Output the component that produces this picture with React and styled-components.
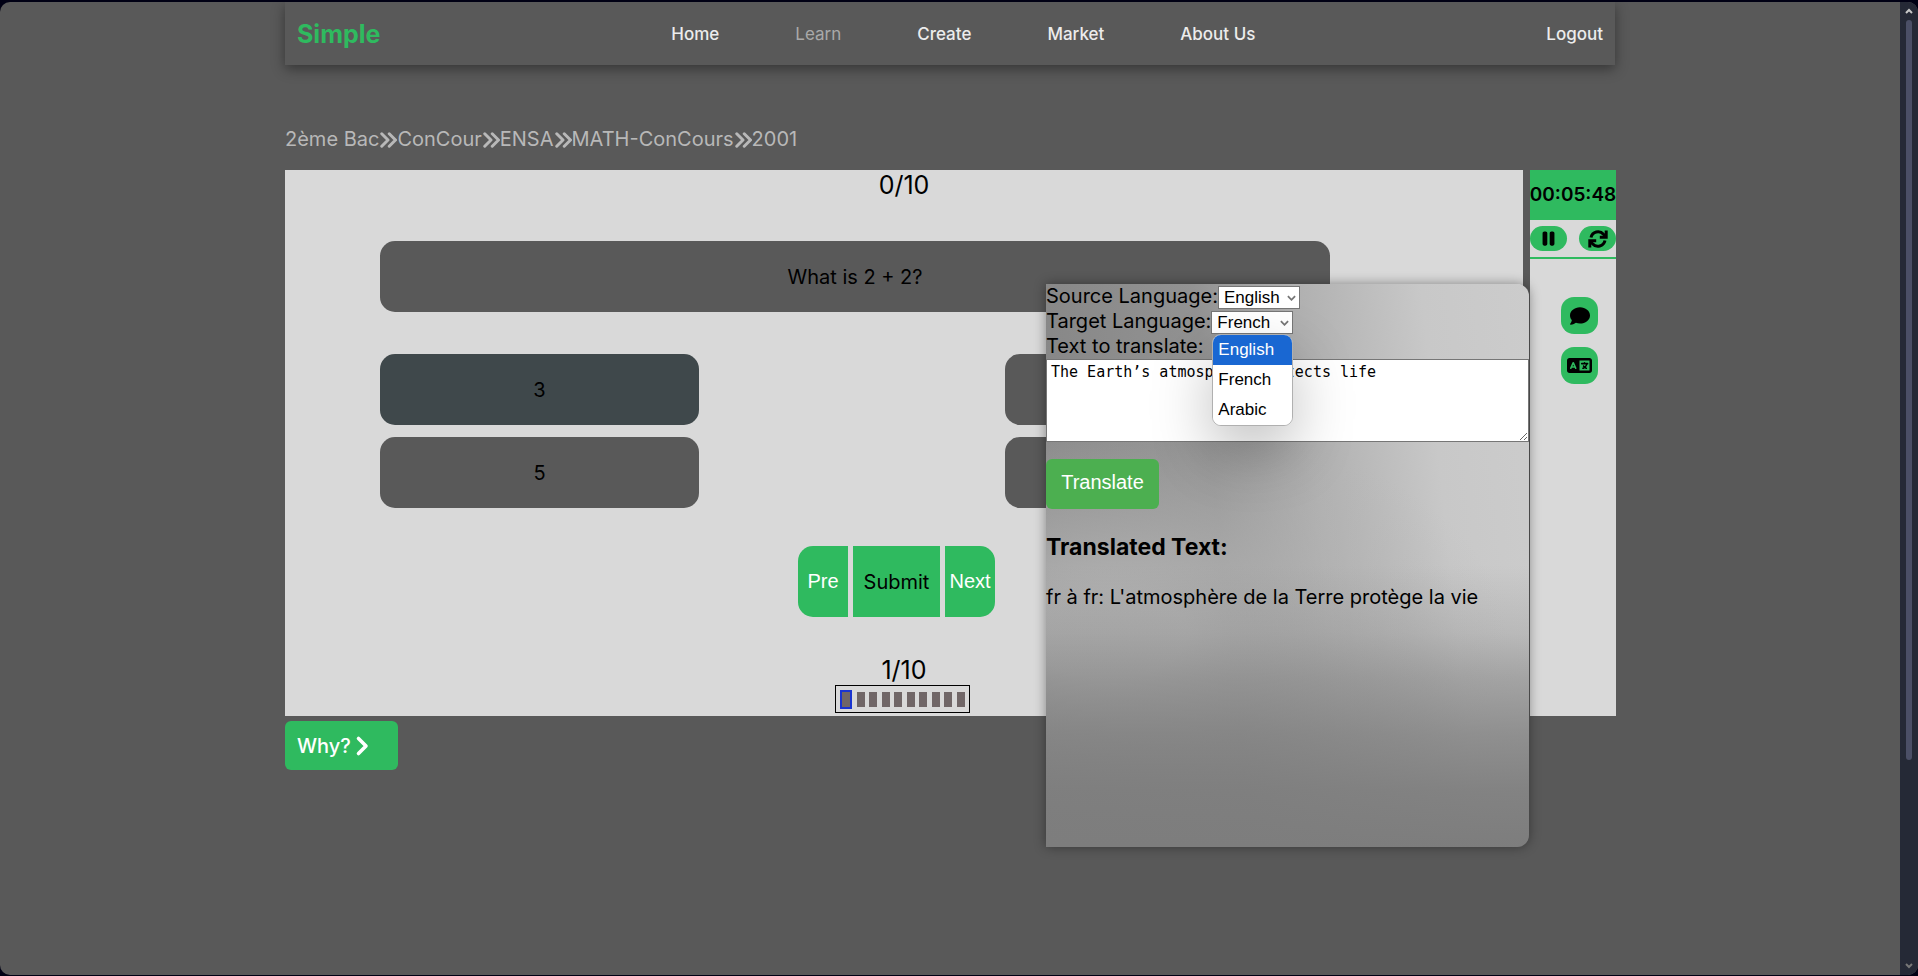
import React, { useState } from 'react';
import styled, { createGlobalStyle } from 'styled-components';
import { FaComment, FaLanguage, FaPause } from 'react-icons/fa6';

const links = ['Home', 'Learn', 'Create', 'Market', 'About Us'];
const crumbs = ['2ème Bac', 'ConCour', 'ENSA', 'MATH-ConCours', '2001'];
const answers = ['3', '4', '5', '6'];
const languages = ['English', 'French', 'Arabic'];
const total = 10;

const App = () => {
  const [chosen, setChosen] = useState('3');
  const [current, setCurrent] = useState(0);
  const [source, setSource] = useState('English');
  const [target, setTarget] = useState('French');
  const [text, setText] = useState('The Earth’s atmosphere protects life');
  const [menuOpen, setMenuOpen] = useState(true);

  const pickTarget = (language) => {
    setTarget(language);
    setMenuOpen(false);
  };

  return (
    <Frame>
      <GlobalStyle />
      <Window>
        <Page>
          <Content>
            <Navbar>
              <Brand href='#'>Simple</Brand>
              <NavLinks>
                {links.map((link) => (
                  <NavLink key={link} href='#' $active={link === 'Learn'}>
                    {link}
                  </NavLink>
                ))}
              </NavLinks>
              <NavLink href='#'>Logout</NavLink>
            </Navbar>

            <Breadcrumb>
              {crumbs.map((crumb, i) => (
                <React.Fragment key={crumb}>
                  {i > 0 && <AnglesRight />}
                  <Crumb href='#'>{crumb}</Crumb>
                </React.Fragment>
              ))}
            </Breadcrumb>

            <Board>
              <Quiz>
                <Count>0/{total}</Count>
                <Question>What is 2 + 2?</Question>
                <Answers>
                  {answers.map((answer) => (
                    <Answer key={answer} $chosen={answer === chosen} onClick={() => setChosen(answer)}>
                      {answer}
                    </Answer>
                  ))}
                </Answers>
                <Controls>
                  <StepButton $side='left' onClick={() => setCurrent(Math.max(0, current - 1))}>
                    Pre
                  </StepButton>
                  <SubmitButton>Submit</SubmitButton>
                  <StepButton $side='right' onClick={() => setCurrent(Math.min(total - 1, current + 1))}>
                    Next
                  </StepButton>
                </Controls>
                <Count>
                  {current + 1}/{total}
                </Count>
                <Steps>
                  {Array.from({ length: total }, (_, i) => (
                    <Step key={i} $current={i === current} />
                  ))}
                </Steps>
              </Quiz>

              <Side>
                <Timer>00:05:48</Timer>
                <TimerButtons>
                  <PillButton aria-label='Pause'>
                    <FaPause />
                  </PillButton>
                  <PillButton aria-label='Restart'>
                    <Rotate />
                  </PillButton>
                </TimerButtons>
                <Tools>
                  <ToolButton aria-label='Comments'>
                    <FaComment size={20} />
                  </ToolButton>
                  <ToolButton aria-label='Translator'>
                    <FaLanguage size={25} />
                  </ToolButton>
                </Tools>
              </Side>

              <Translator>
                <Field>
                  <label htmlFor='source'>Source Language:</label>
                  <SelectBox>
                    <Select id='source' value={source} onChange={(e) => setSource(e.target.value)}>
                      {languages.map((language) => (
                        <option key={language}>{language}</option>
                      ))}
                    </Select>
                    <Chevron />
                  </SelectBox>
                </Field>
                <Field>
                  <label htmlFor='target'>Target Language:</label>
                  <SelectBox>
                    <Select id='target' value={target} onChange={(e) => setTarget(e.target.value)}>
                      {languages.map((language) => (
                        <option key={language}>{language}</option>
                      ))}
                    </Select>
                    <Chevron />
                    {menuOpen && (
                      <Menu role='listbox' aria-label='Target Language'>
                        {languages.map((language, i) => (
                          <MenuItem key={language} role='option' aria-selected={i === 0} $active={i === 0} onClick={() => pickTarget(language)}>
                            {language}
                          </MenuItem>
                        ))}
                      </Menu>
                    )}
                  </SelectBox>
                </Field>
                <Field>
                  <label htmlFor='text'>Text to translate:</label>
                </Field>
                <TextArea id='text' value={text} onChange={(e) => setText(e.target.value)} spellCheck={false} />
                <TranslateButton>Translate</TranslateButton>
                <ResultTitle>Translated Text:</ResultTitle>
                <Result>fr à fr: L'atmosphère de la Terre protège la vie</Result>
              </Translator>
            </Board>

            <WhyButton>
              Why? <AngleRight />
            </WhyButton>
          </Content>
        </Page>

        <Scrollbar aria-hidden='true'>
          <ScrollArrow viewBox='0 0 8 6'>
            <path d='M1 5l3-3 3 3' stroke='#c8c8c8' />
          </ScrollArrow>
          <Track>
            <Thumb />
          </Track>
          <ScrollArrow viewBox='0 0 8 6'>
            <path d='M1 1l3 3 3-3' stroke='#777777' />
          </ScrollArrow>
        </Scrollbar>
      </Window>
    </Frame>
  );
};

const Chevron = () => (
  <ChevronIcon viewBox='0 0 10 6' aria-hidden='true'>
    <path d='M1 1l4 4 4-4' />
  </ChevronIcon>
);

const AnglesRight = () => (
  <AngleIcon width='18' height='20' viewBox='0 0 448 512' aria-hidden='true'>
    <path d='M64 96l160 160L64 416M256 96l160 160-160 160' />
  </AngleIcon>
);

const AngleRight = () => (
  <AngleIcon width='15' height='24' viewBox='0 0 320 512' aria-hidden='true'>
    <path d='M96 96l160 160L96 416' />
  </AngleIcon>
);

const Rotate = () => (
  <RotateIcon viewBox='0 0 20 20' aria-hidden='true'>
    <path d='M3 8.5a7.2 7.2 0 0 1 12.5-3.2L17.8 7.6' />
    <path d='M18.2 1.6v6.6h-6.4' />
    <path d='M17 11.5a7.2 7.2 0 0 1-12.5 3.2L2.2 12.4' />
    <path d='M1.8 18.4v-6.6h6.4' />
  </RotateIcon>
);

const GlobalStyle = createGlobalStyle`
  * {
    box-sizing: border-box;
  }
  body {
    margin: 0;
    background-color: #000014;
    font-family: Inter, 'Liberation Sans', sans-serif;
    font-size: 20px;
    line-height: 25px;
    color: #000;
  }
  button {
    border: none;
    padding: 0;
    cursor: pointer;
  }
`;

const Frame = styled.div`
  display: flex;
  min-height: 100vh;
  padding: 2px 0 1px;
`;

const Window = styled.div`
  display: flex;
  flex: 1;
  border-radius: 10px;
  overflow: hidden;
  background-color: #595959;
`;

const Page = styled.main`
  flex: 1;
`;

const Content = styled.div`
  width: 70%;
  margin: 0 auto;
`;

const Navbar = styled.nav`
  display: flex;
  justify-content: space-between;
  align-items: center;
  height: 63px;
  padding: 2px 12px 0;
  box-shadow: 0 4px 12px rgba(0, 0, 0, 0.4);
`;

const Brand = styled.a`
  font-size: 25px;
  font-weight: 700;
  color: #2fba5f;
  text-decoration: none;
`;

const NavLinks = styled.div`
  display: flex;
  gap: 76px;
`;

const NavLink = styled.a`
  font-size: 17px;
  font-weight: ${({ $active }) => ($active ? 400 : 500)};
  color: ${({ $active }) => ($active ? '#a9a9a9' : '#ececec')};
  text-decoration: none;
`;

const Breadcrumb = styled.div`
  display: flex;
  align-items: center;
  margin: 62px 0 18px;
  color: #b8b8b8;
`;

const Crumb = styled.a`
  color: inherit;
  text-decoration: none;
`;

const AngleIcon = styled.svg`
  fill: none;
  stroke: currentColor;
  stroke-width: 76;
  stroke-linecap: round;
  stroke-linejoin: round;
`;

const RotateIcon = styled.svg`
  width: 20px;
  height: 20px;
  fill: none;
  stroke: currentColor;
  stroke-width: 3;
  stroke-linecap: butt;
  stroke-linejoin: miter;
`;

const Board = styled.section`
  position: relative;
  display: flex;
  gap: 7px;
  margin-right: -1px;
`;

const Quiz = styled.div`
  flex: 1;
  display: flex;
  flex-direction: column;
  padding: 0 193px 3px 95px;
  background-color: #d9d9d9;
`;

const Count = styled.div`
  margin-right: -98px;
  font-size: 25px;
  line-height: 30px;
  text-align: center;
`;

const Question = styled.div`
  display: flex;
  align-items: center;
  justify-content: center;
  height: 71px;
  margin: 41px 0 42px;
  padding-top: 1px;
  border-radius: 15px;
  background-color: #595959;
`;

const Answers = styled.div`
  display: grid;
  grid-template-columns: 319px 319px;
  column-gap: 306px;
  row-gap: 12px;
`;

const Answer = styled.button`
  height: 71px;
  border-radius: 15px;
  background-color: ${({ $chosen }) => ($chosen ? '#3f484b' : '#595959')};
  font-family: inherit;
  font-size: 20px;
  color: #000;
`;

const Controls = styled.div`
  display: flex;
  justify-content: center;
  gap: 5px;
  margin: 38px -83px 38px 0;
`;

const StepButton = styled.button`
  width: 50px;
  height: 71px;
  border-radius: ${({ $side }) => ($side === 'left' ? '15px 0 0 15px' : '0 15px 15px 0')};
  background-color: #2fba5f;
  font-family: 'Liberation Sans', Arial, sans-serif;
  font-size: 20px;
  color: #fff;
`;

const SubmitButton = styled.button`
  width: 87px;
  height: 71px;
  background-color: #2fba5f;
  font-family: inherit;
  font-size: 20px;
  color: #000;
`;

const Steps = styled.div`
  display: flex;
  align-items: center;
  justify-content: space-between;
  width: 135px;
  height: 28px;
  padding: 0 4px;
  margin-left: 455px;
  border: 1px solid #000;
`;

const Step = styled.span`
  box-sizing: content-box;
  width: 8px;
  height: 15px;
  background-color: #706667;
  border: ${({ $current }) => ($current ? '2px solid #1a34d0' : 'none')};
`;

const Side = styled.aside`
  width: 86px;
  background-color: #d9d9d9;
`;

const Timer = styled.div`
  display: flex;
  align-items: center;
  justify-content: center;
  height: 50px;
  padding-bottom: 2px;
  background-color: #2fba5f;
  font-size: 19px;
  font-weight: 600;
`;

const TimerButtons = styled.div`
  display: flex;
  justify-content: space-between;
  padding: 6px 0;
  border-bottom: 2px solid #2fba5f;
`;

const PillButton = styled.button`
  display: flex;
  align-items: center;
  justify-content: center;
  width: 37px;
  height: 25px;
  border-radius: 13px;
  background-color: #2fba5f;
  font-size: 19px;
  color: #000;
`;

const Tools = styled.div`
  display: flex;
  flex-direction: column;
  align-items: flex-end;
  gap: 13px;
  padding: 38px 18px 0 0;
`;

const ToolButton = styled(PillButton)`
  height: 37px;
`;

const Translator = styled.div`
  position: absolute;
  top: 114px;
  right: 87px;
  display: flex;
  flex-direction: column;
  align-items: flex-start;
  width: 483px;
  height: 563px;
  border-radius: 0 12px 12px 0;
  background:
    linear-gradient(
      rgba(125, 125, 125, 0) 50%,
      rgba(125, 125, 125, 0.22) 62%,
      rgba(125, 125, 125, 0.5) 70%,
      rgba(125, 125, 125, 0.76) 80%,
      rgba(125, 125, 125, 0.93) 90%,
      rgb(125, 125, 125)
    ),
    radial-gradient(ellipse 400px 220px at 60px 350px, rgba(180, 180, 180, 0.9) 20%, rgba(180, 180, 180, 0) 100%),
    linear-gradient(84deg, #848484, #929292 38%, #b0b0b0 57%, #c8c8c8 80%, #cccccc);
  box-shadow: 0 0 12px rgba(0, 0, 0, 0.4);
`;

const Field = styled.div`
  display: flex;
  align-items: flex-end;
  height: 25px;
`;

const SelectBox = styled.div`
  position: relative;
  display: flex;
`;

const Select = styled.select`
  appearance: none;
  width: 82px;
  height: 23px;
  padding: 0 5px;
  border: 1px solid #767676;
  border-radius: 0;
  background-color: #fff;
  font-family: 'Liberation Sans', Arial, sans-serif;
  font-size: 17px;
  color: #000;
`;

const ChevronIcon = styled.svg`
  position: absolute;
  top: 9px;
  right: 4px;
  width: 9px;
  height: 6px;
  fill: none;
  stroke: #767676;
  stroke-width: 2;
  pointer-events: none;
`;

const Menu = styled.ul`
  position: absolute;
  top: 100%;
  left: 1px;
  right: 0;
  margin: 0;
  padding: 0;
  border: 1px solid #b0b0b0;
  border-radius: 9px;
  overflow: hidden;
  background-color: #fff;
  box-shadow: 0 25px 60px rgba(0, 0, 0, 0.25);
  list-style: none;
`;

const MenuItem = styled.li`
  height: 30px;
  padding: 0 5px;
  background-color: ${({ $active }) => ($active ? '#1967d2' : '#fff')};
  font-family: 'Liberation Sans', Arial, sans-serif;
  font-size: 17px;
  line-height: 30px;
  color: ${({ $active }) => ($active ? '#fff' : '#000')};
  cursor: pointer;
`;

const TextArea = styled.textarea`
  width: 100%;
  height: 83px;
  padding: 2px 4px;
  border: 1px solid #767676;
  background-color: #fff;
  font-family: 'DejaVu Sans Mono', monospace;
  font-size: 15px;
  line-height: 20px;
  color: #000;
`;

const TranslateButton = styled.button`
  width: 113px;
  height: 50px;
  margin: 17px 0 24px;
  padding-bottom: 4px;
  border-radius: 6px;
  background-color: #4caf50;
  font-family: 'Liberation Sans', Arial, sans-serif;
  font-size: 20px;
  color: #fff;
`;

const ResultTitle = styled.h3`
  margin: 0 0 24px;
  font-size: 23px;
  line-height: 28px;
`;

const Result = styled.p`
  margin: 0;
`;

const WhyButton = styled.button`
  display: flex;
  align-items: center;
  gap: 3px;
  width: 113px;
  height: 49px;
  margin-top: 5px;
  padding: 0 12px;
  border-radius: 6px;
  background-color: #2fba5f;
  font-family: inherit;
  font-size: 20px;
  font-weight: 500;
  color: #fff;
`;

const Scrollbar = styled.div`
  display: flex;
  flex-direction: column;
  align-items: center;
  width: 18px;
  padding: 6px 0;
  background-color: #252936;
`;

const ScrollArrow = styled.svg`
  width: 8px;
  height: 6px;
  fill: none;
  stroke-width: 2;
`;

const Track = styled.div`
  flex: 1;
  width: 6px;
  padding: 6px 0;
`;

const Thumb = styled.div`
  height: 79%;
  border-radius: 3px;
  background-color: #4b4f66;
`;

export default App;
